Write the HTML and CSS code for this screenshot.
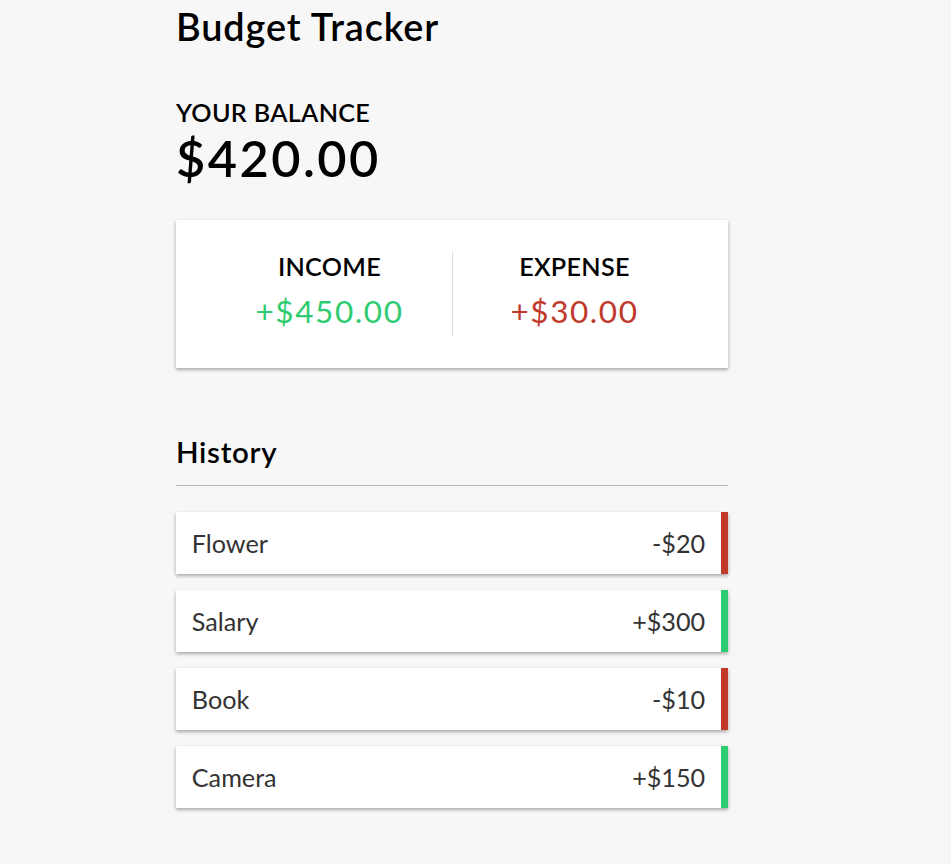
FILE: index.html
```html
<!DOCTYPE html>
<html lang="en">
<head>
<meta charset="UTF-8">
<title>Budget Tracker</title>
<link rel="stylesheet" href="styles.css">
</head>
<body>
<div class="container">
  <h2 class="title">Budget Tracker</h2>
  <h4 class="label">Your Balance</h4>
  <h1 class="balance">$420.00</h1>
  <div class="inc-exp">
    <div class="half half-first">
      <h4 class="label">Income</h4>
      <p class="money plus">+$450.00</p>
    </div>
    <div class="half">
      <h4 class="label">Expense</h4>
      <p class="money minus">+$30.00</p>
    </div>
  </div>
  <h3 class="history">History</h3>
  <ul class="list">
    <li class="item minus"><span>Flower</span><span>-$20</span></li>
    <li class="item plus"><span>Salary</span><span>+$300</span></li>
    <li class="item minus"><span>Book</span><span>-$10</span></li>
    <li class="item plus"><span>Camera</span><span>+$150</span></li>
  </ul>
</div>
</body>
</html>
```

FILE: styles.css
```css
* { box-sizing: border-box; }

body {
  margin: 0;
  background-color: #f7f7f7;
  font-family: "Lato", "Open Sans", sans-serif;
  font-size: 25.2px;
  line-height: 1.2;
}

.container {
  width: 552px;
  margin: 0 0 60px 176px;
  padding-top: 3.5px;
}

.title {
  font-size: 37.85px;
  font-weight: 600;
  letter-spacing: 0.9px;
  margin: 0 0 48.5px;
  color: #000;
}

.label {
  font-size: 25.2px;
  font-weight: 600;
  letter-spacing: 0.3px;
  margin: 0;
  text-transform: uppercase;
  color: #000;
}

.balance {
  font-size: 50.5px;
  font-weight: 600;
  letter-spacing: 2.45px;
  margin: 0;
}

.inc-exp {
  background-color: #fff;
  box-shadow: 0 1.6px 4.7px rgba(0, 0, 0, 0.12), 0 1.6px 3.2px rgba(0, 0, 0, 0.24);
  padding: 31.5px;
  display: flex;
  margin: 31.5px 0 0;
}

.half {
  flex: 1;
  text-align: center;
}

.half-first {
  border-right: 1px solid #dedede;
}

.money {
  font-size: 31.5px;
  letter-spacing: 1.58px;
  margin: 11.5px 0 5.7px;
}

.money.plus { color: #2ecc71; }
.money.minus { color: #c0392b; }

.history {
  font-size: 29.5px;
  font-weight: 600;
  letter-spacing: 0.7px;
  margin: 66px 0 0;
  padding-bottom: 15.8px;
  border-bottom: 1px solid #bbb;
}

.list {
  list-style: none;
  padding: 0;
  margin: 26px 0 0;
  display: flex;
  flex-direction: column;
  gap: 16px;
}

.item {
  background-color: #fff;
  box-shadow: 0 1.6px 4.7px rgba(0, 0, 0, 0.12), 0 1.6px 3.2px rgba(0, 0, 0, 0.24);
  color: #333;
  display: flex;
  justify-content: space-between;
  padding: 15.8px;
  height: 62px;
}

.item.plus { border-right: 7.9px solid #2ecc71; }
.item.minus { border-right: 7.9px solid #c0392b; }
```
